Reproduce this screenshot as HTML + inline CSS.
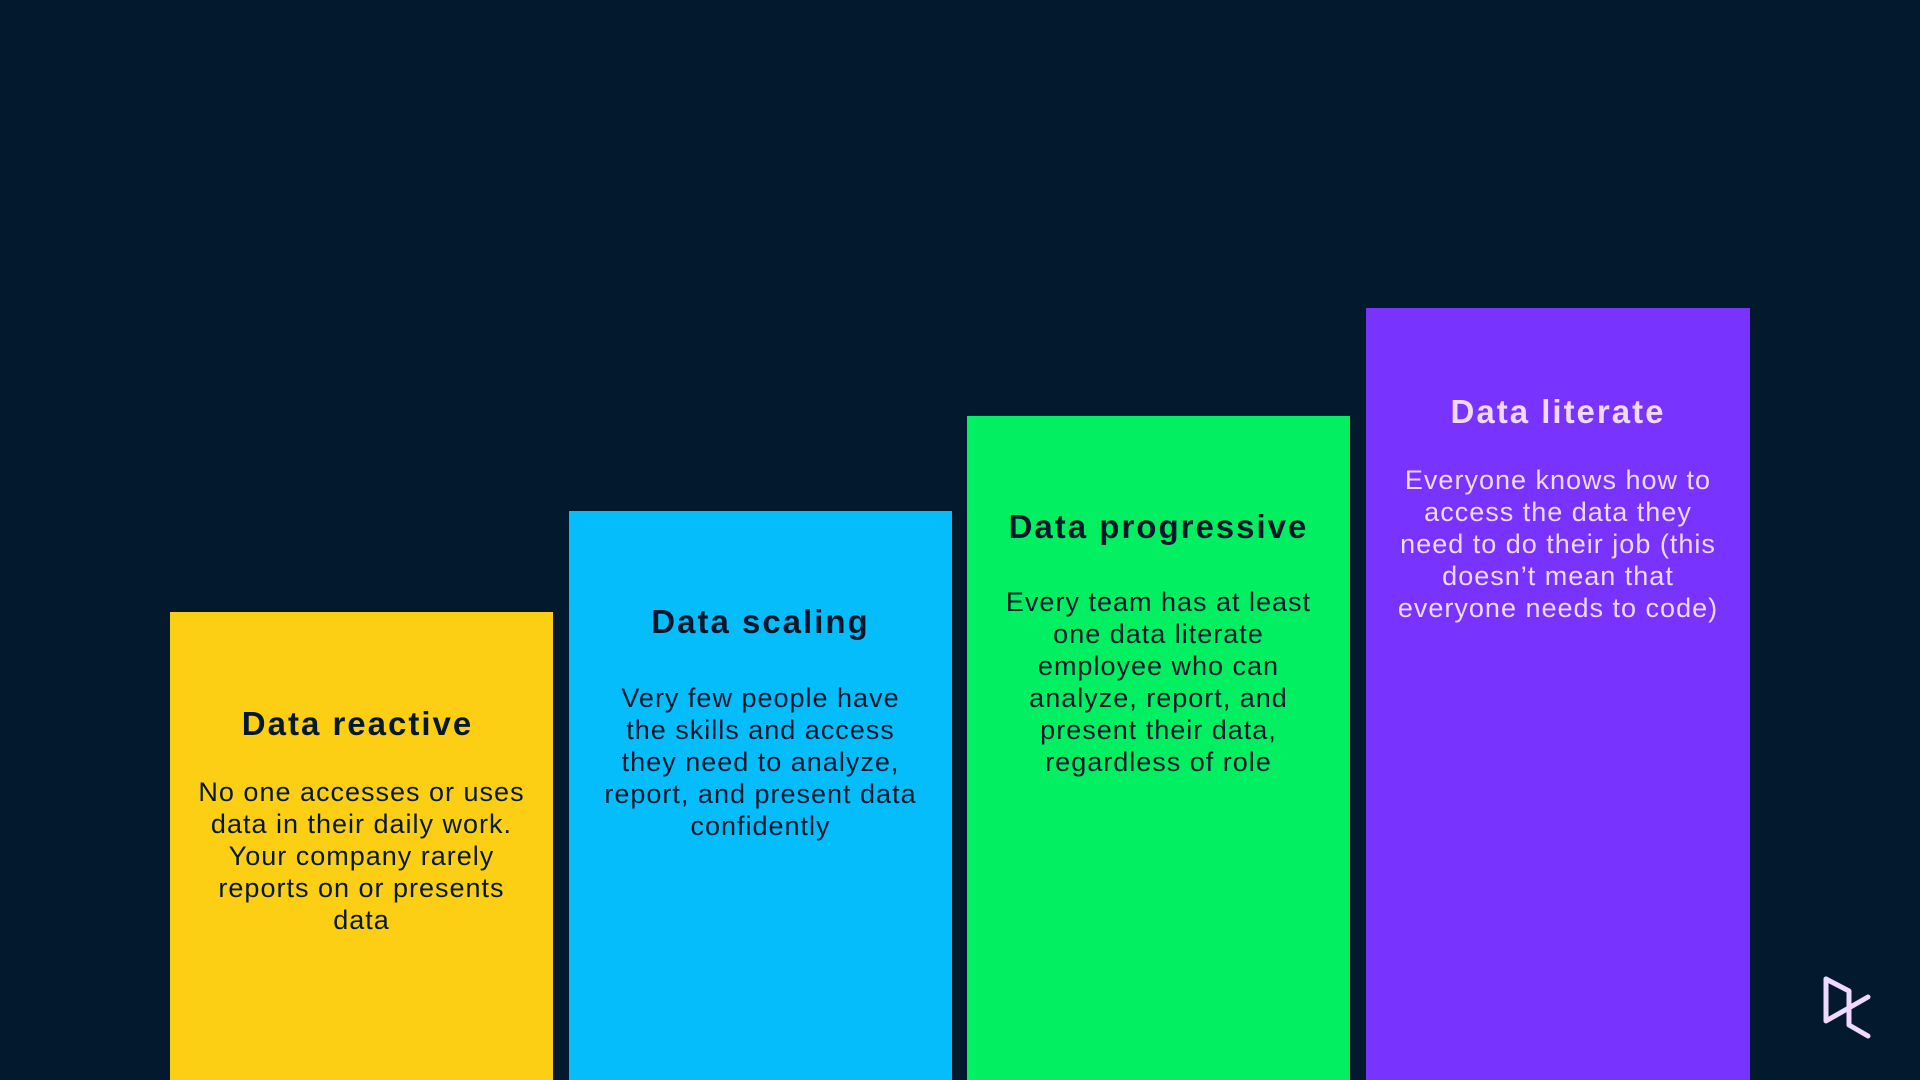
<!DOCTYPE html>
<html><head><meta charset="utf-8"><style>
html,body{margin:0;padding:0}
body{width:1920px;height:1080px;background:#03192E;position:relative;overflow:hidden;font-family:"Liberation Sans",sans-serif}
.b{position:absolute;bottom:0;width:383px}
.t{position:absolute;left:0;right:0;text-align:center;font-weight:bold;font-size:33px;line-height:40px;color:#05192D;letter-spacing:2px}
.p{position:absolute;left:0;right:0;text-align:center;font-size:27px;line-height:32px;color:#05192D;white-space:nowrap;letter-spacing:1px}
</style></head><body>
<div class="b" style="left:170px;top:612px;background:#FCCE14">
 <div class="t" style="top:92px;left:-8px">Data reactive</div>
 <div class="p" style="top:164px">No one accesses or uses<br>data in their daily work.<br>Your company rarely<br>reports on or presents<br>data</div>
</div>
<div class="b" style="left:569px;top:511px;background:#06BDFC">
 <div class="t" style="top:91px">Data scaling</div>
 <div class="p" style="top:171px">Very few people have<br>the skills and access<br>they need to analyze,<br>report, and present data<br>confidently</div>
</div>
<div class="b" style="left:967px;top:416px;background:#03EF62">
 <div class="t" style="top:91px">Data progressive</div>
 <div class="p" style="top:170px">Every team has at least<br>one data literate<br>employee who can<br>analyze, report, and<br>present their data,<br>regardless of role</div>
</div>
<div class="b" style="left:1366px;top:308px;width:384px;background:#7933FF">
 <div class="t" style="top:84px;color:#EFD9FF">Data literate</div>
 <div class="p" style="top:156px;color:#EFD9FF">Everyone knows how to<br>access the data they<br>need to do their job (this<br>doesn’t mean that<br>everyone needs to code)</div>
</div>
<svg style="position:absolute;left:0;top:0" width="1920" height="1080">
 <g fill="none" stroke="#EFD9FF" stroke-width="5" stroke-linecap="round" stroke-linejoin="round">
  <path d="M1826 979 L1826 1021 L1868 997"/>
  <path d="M1826 979 L1849 991 L1849 1025 L1868 1036"/>
 </g>
</svg>
</body></html>
